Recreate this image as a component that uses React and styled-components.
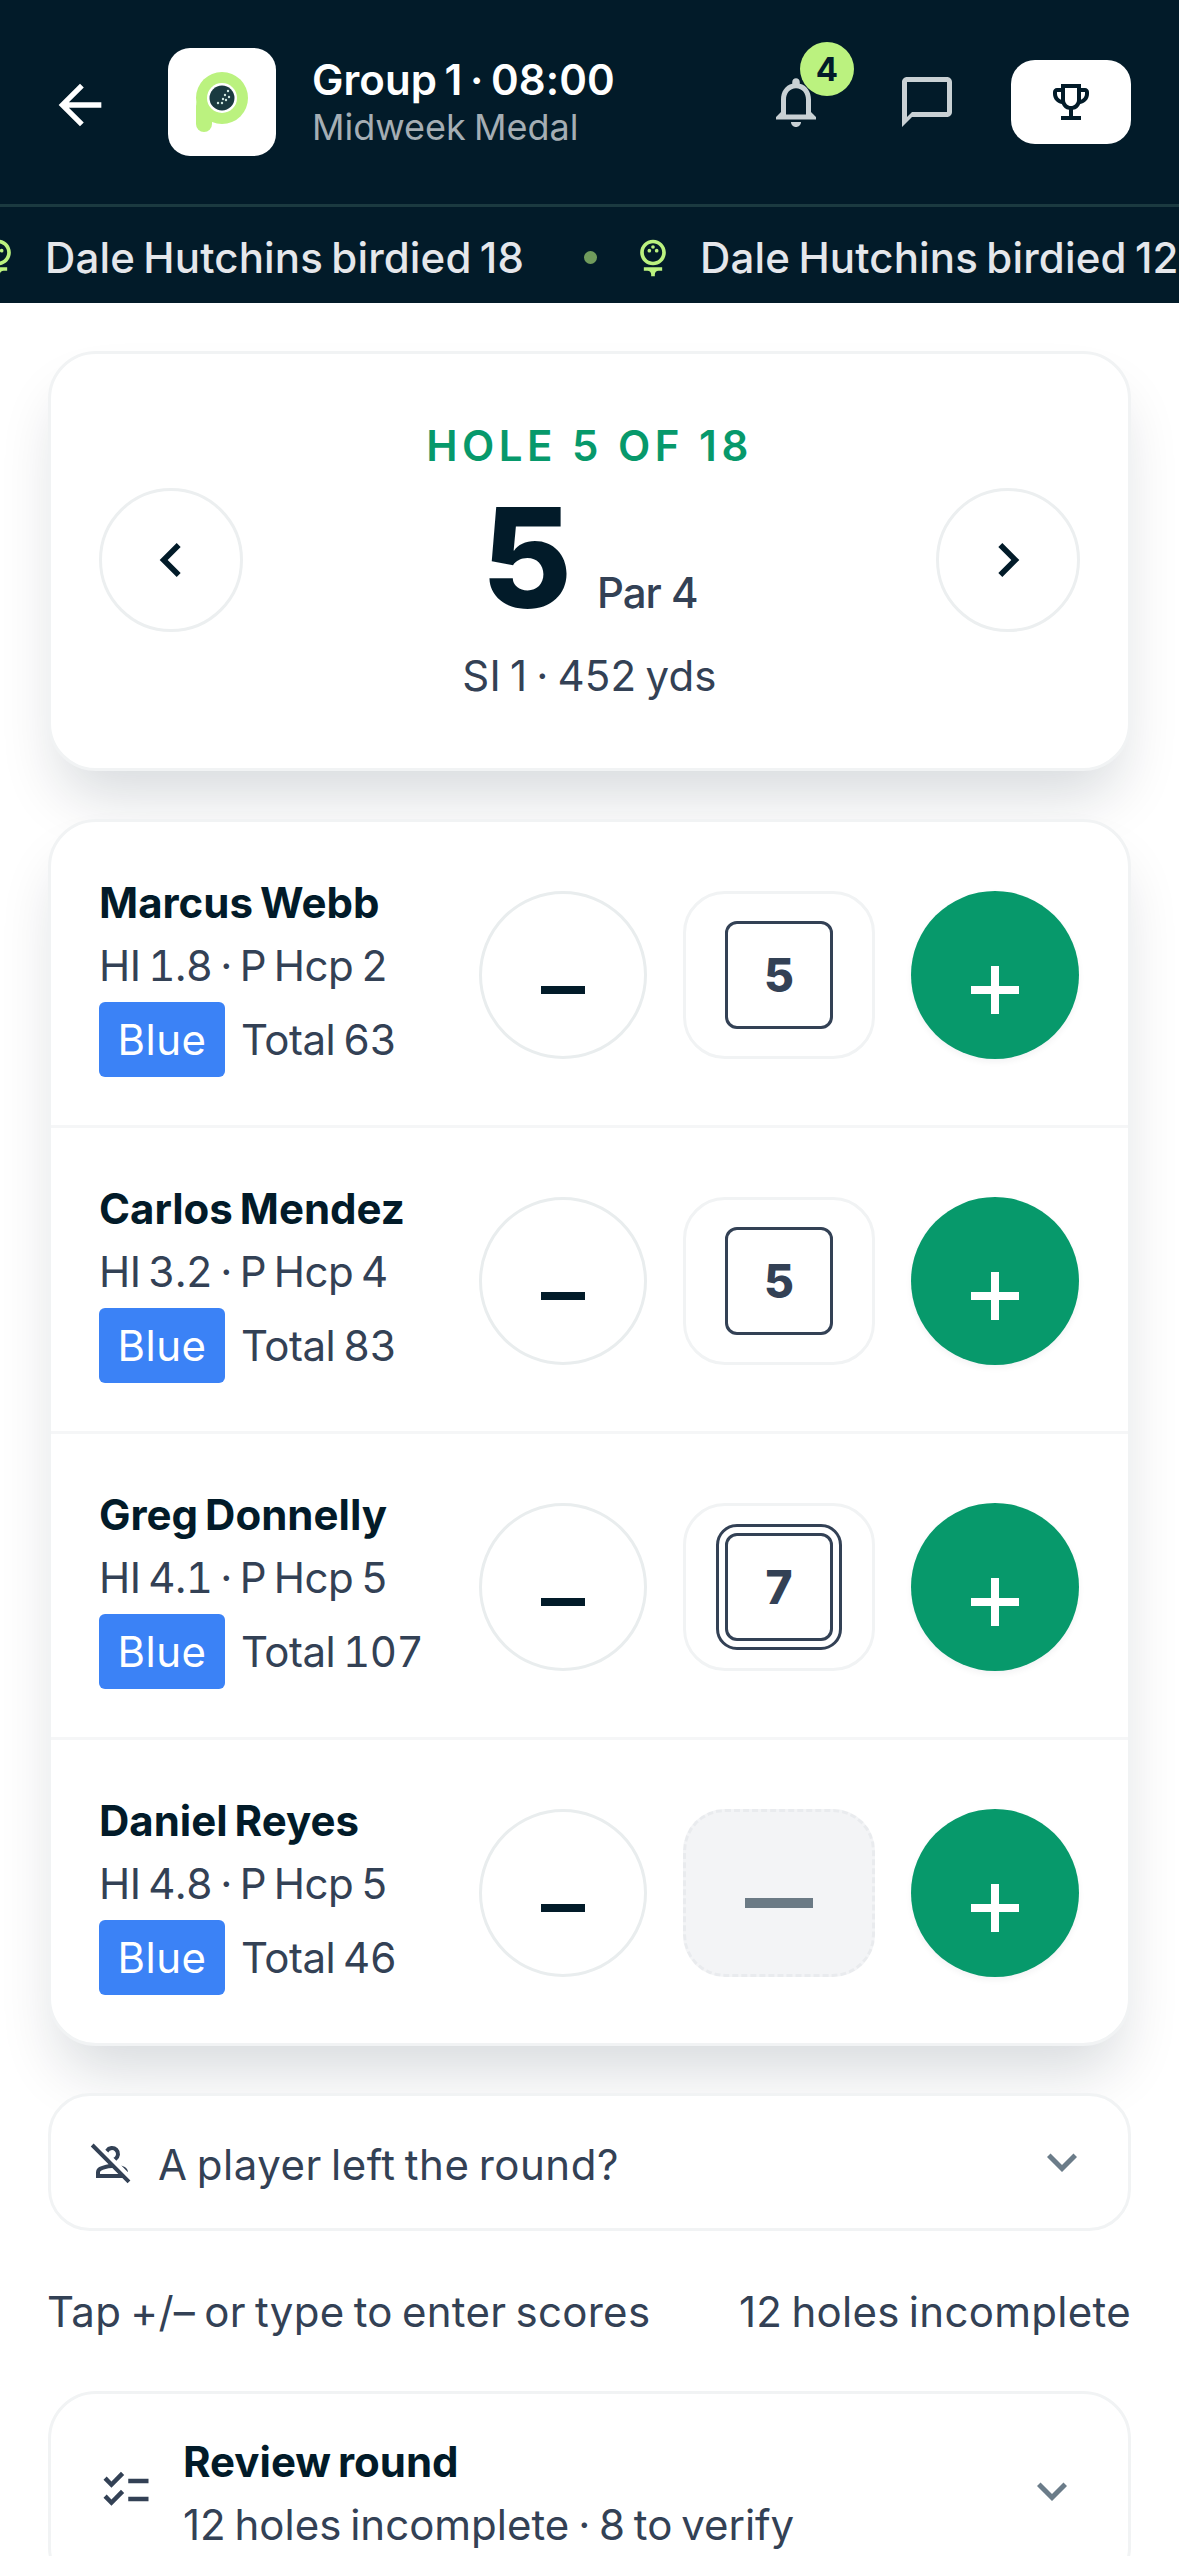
import React from "react";
import styled, { createGlobalStyle } from "styled-components";
import {
  MdArrowBack,
  MdNotificationsNone,
  MdChatBubbleOutline,
  MdOutlineEmojiEvents,
  MdOutlineSportsGolf,
  MdChevronLeft,
  MdChevronRight,
  MdExpandMore,
  MdOutlinePersonOff,
  MdChecklist,
} from "react-icons/md";

const Global = createGlobalStyle`
  html, body { margin: 0; padding: 0; background: #fff; }
  body { font-family: Inter, "Noto Sans", sans-serif; color: #021b29; overflow: hidden; }
  * { box-sizing: border-box; }
`;

const Page = styled.div`
  width: 1179px;
  height: 2556px;
  overflow: hidden;
  background: #fff;
`;

const Header = styled.header`
  background: #021b29;
`;

const TopBar = styled.div`
  height: 204px;
  display: flex;
  align-items: center;
  padding-left: 48px;
  padding-right: 48px;
`;

const BackButton = styled.div`
  display: flex;
  width: 64px;
  color: #fff;
  margin: 6px 56px 0 0;
`;

const LogoTile = styled.div`
  width: 108px;
  height: 108px;
  border-radius: 22px;
  background: #fff;
  display: flex;
  margin-right: 36px;
`;

const Titles = styled.div`
  flex: 1;
  min-width: 0;
`;

const Title = styled.div`
  font-size: 42px;
  line-height: 50px;
  font-weight: 600;
  letter-spacing: 0.05px;
  word-spacing: -3px;
  color: #fff;
`;

const Subtitle = styled.div`
  font-size: 36px;
  line-height: 44px;
  word-spacing: -2px;
  color: #a5aeb4;
`;

const IconAction = styled.div`
  position: relative;
  display: flex;
  color: #c9d1d4;
  margin-right: ${(p) => p.$gap}px;
`;

const Badge = styled.span`
  position: absolute;
  top: -30px;
  left: 34px;
  width: 54px;
  height: 54px;
  border-radius: 50%;
  background: #bbf27f;
  color: #021b29;
  font-size: 33px;
  font-weight: 700;
  display: flex;
  align-items: center;
  justify-content: center;
`;

const TrophyButton = styled.div`
  width: 120px;
  height: 84px;
  border-radius: 24px;
  background: #fff;
  color: #021b29;
  display: flex;
  align-items: center;
  justify-content: center;
`;

const Ticker = styled.div`
  height: 99px;
  padding-top: 5px;
  border-top: 3px solid #1b3a40;
  display: flex;
  align-items: center;
  overflow: hidden;
  white-space: nowrap;
`;

const TickerTrack = styled.div`
  display: flex;
  align-items: center;
  transform: translateX(-24px);
`;

const TickerItem = styled.div`
  display: flex;
  align-items: center;
  flex: none;
  gap: 25px;
  font-size: 42px;
  font-weight: 500;
  letter-spacing: 0.15px;
  word-spacing: -3px;
  color: #e5e7eb;
  svg { color: #bbf27f; flex: none; }
`;

const TickerDot = styled.span`
  width: 13px;
  height: 13px;
  border-radius: 50%;
  background: #bbf27f;
  opacity: 0.6;
  flex: none;
  margin: 0 34px 0 60px;
`;

const Main = styled.main`
  display: flex;
  flex-direction: column;
  padding: 48px 48px 0;
`;

const Card = styled.section`
  background: #fff;
  border: 3px solid #f1f3f4;
  border-radius: 48px;
`;

const HoleCard = styled(Card)`
  height: 420px;
  padding: 68px 48px 0;
  margin-bottom: 48px;
  box-shadow: 0 36px 60px -12px rgba(2, 27, 41, 0.16);
  display: flex;
  flex-direction: column;
  align-items: center;
`;

const HoleLabel = styled.div`
  font-size: 42px;
  line-height: 48px;
  font-weight: 600;
  letter-spacing: 4.5px;
  color: #07996b;
`;

const HoleNav = styled.div`
  width: 100%;
  height: 144px;
  margin-top: 18px;
  display: flex;
  align-items: center;
  justify-content: space-between;
`;

const NavButton = styled.div`
  width: 144px;
  height: 144px;
  border-radius: 50%;
  border: 3px solid #eceff0;
  display: flex;
  align-items: center;
  justify-content: center;
  color: #021b29;
`;

const HoleFigure = styled.div`
  display: flex;
  align-items: baseline;
  gap: 25px;
  transform: translateY(-2px);
`;

const HoleNumber = styled.span`
  font-size: 139px;
  line-height: 144px;
  font-weight: 800;
  color: #021b29;
`;

const Par = styled.span`
  font-size: 42px;
  font-weight: 500;
  letter-spacing: -1px;
  color: #334155;
`;

const HoleMeta = styled.div`
  font-size: 42px;
  line-height: 60px;
  margin-top: 14px;
  letter-spacing: 0.2px;
  word-spacing: -3px;
  color: #334155;
`;

const PlayersCard = styled(Card)`
  margin-bottom: 47px;
  box-shadow: 0 36px 60px -12px rgba(2, 27, 41, 0.16);
`;

const PlayerRow = styled.div`
  height: ${(p) => (p.$last ? 303 : 306)}px;
  padding: 0 49px 0 48px;
  display: flex;
  align-items: center;
  justify-content: space-between;
  border-bottom: ${(p) => (p.$last ? "none" : "3px solid #f5f6f7")};
`;

const PlayerInfo = styled.div`
  display: flex;
  flex-direction: column;
`;

const PlayerName = styled.div`
  font-size: 42px;
  line-height: 63px;
  font-weight: 700;
  word-spacing: -3px;
  color: #021b29;
`;

const PlayerMeta = styled.div`
  font-size: 42px;
  line-height: 63px;
  letter-spacing: -0.5px;
  word-spacing: -3px;
  font-variant-numeric: tabular-nums;
  color: #334155;
`;

const TeeLine = styled.div`
  display: flex;
  align-items: center;
  gap: 16px;
  margin-top: 5px;
  font-size: 42px;
  letter-spacing: -0.5px;
  word-spacing: -3px;
  font-variant-numeric: tabular-nums;
  color: #334155;
`;

const TeePill = styled.span`
  width: 126px;
  height: 75px;
  border-radius: 6px;
  background: #3b82f6;
  color: #fff;
  letter-spacing: 0.5px;
  display: flex;
  align-items: center;
  justify-content: center;
`;

const Controls = styled.div`
  display: flex;
  align-items: center;
  gap: 36px;
  margin-top: 2px;
`;

const RoundButton = styled.div`
  width: 168px;
  height: 168px;
  border-radius: 50%;
  display: flex;
  align-items: center;
  justify-content: center;
  padding-top: 30px;
`;

const MinusButton = styled(RoundButton)`
  border: 3px solid #e9edee;
  background: #fff;
`;

const PlusButton = styled(RoundButton)`
  background: #07996b;
  color: #fff;
  box-shadow: 0 3px 6px rgba(2, 27, 41, 0.05);
`;

const MinusBar = styled.span`
  width: 44px;
  height: 8px;
  background: #021b29;
`;

const ScoreCell = styled.div`
  width: 192px;
  height: 168px;
  border-radius: 42px;
  border: 3px ${(p) => (p.$empty ? "dashed #e9ebee" : "solid #f1f3f4")};
  background: ${(p) => (p.$empty ? "#f3f4f6" : "#fff")};
  display: flex;
  align-items: center;
  justify-content: center;
`;

const ScoreBox = styled.div`
  position: relative;
  width: 108px;
  height: 108px;
  border: 3px solid #334155;
  border-radius: 12px;
  display: flex;
  align-items: center;
  justify-content: center;
  font-size: 46px;
  font-weight: 800;
  color: #334155;

  ${(p) =>
    p.$double &&
    `
    &::after {
      content: "";
      position: absolute;
      inset: -12px;
      border: 3px solid #334155;
      border-radius: 21px;
    }
  `}
`;

const EmptyDash = styled.span`
  width: 68px;
  height: 10px;
  background: #6b7a85;
  margin-top: 20px;
`;

const LeftRound = styled(Card)`
  height: 138px;
  border-radius: 42px;
  padding: 0 36px 0 37px;
  display: flex;
  align-items: center;
  font-size: 42px;
  letter-spacing: 0.5px;
  word-spacing: -3px;
  color: #334155;
`;

const LeftLabel = styled.span`
  flex: 1;
  margin: 4px 0 0 22px;
  font-weight: 400;
`;

const Caret = styled.div`
  display: flex;
  color: #6b7c89;
`;

const Hint = styled.div`
  height: 160px;
  padding-top: 1px;
  margin-left: -1px;
  display: flex;
  align-items: center;
  justify-content: space-between;
  font-size: 42px;
  letter-spacing: 0.3px;
  word-spacing: -3px;
  color: #334155;
`;

const ReviewCard = styled(Card)`
  height: 204px;
  padding: 36px 46px 0 48px;
  display: flex;
  align-items: flex-start;
  color: #334155;
`;

const ReviewIcon = styled.div`
  display: flex;
  margin: 33px 30px 0 0;
`;

const ReviewText = styled.div`
  flex: 1;
`;

const ReviewTitle = styled.div`
  font-size: 42px;
  line-height: 63px;
  font-weight: 700;
  word-spacing: -3px;
  color: #021b29;
`;

const ReviewSub = styled.div`
  font-size: 42px;
  line-height: 63px;
  word-spacing: -3px;
  color: #334155;
`;

const ReviewCaret = styled(Caret)`
  margin-top: 31px;
`;

const players = [
  { name: "Marcus Webb", meta: "HI 1.8 · P Hcp 2", total: 63, score: 5 },
  { name: "Carlos Mendez", meta: "HI 3.2 · P Hcp 4", total: 83, score: 5 },
  { name: "Greg Donnelly", meta: "HI 4.1 · P Hcp 5", total: 107, score: 7, double: true },
  { name: "Daniel Reyes", meta: "HI 4.8 · P Hcp 5", total: 46 },
];

const Logo = () => (
  <svg width="108" height="108" viewBox="0 0 108 108" aria-hidden="true">
    <circle cx="54" cy="50" r="26" fill="#bbf27f" />
    <rect x="28" y="50" width="16" height="34" rx="8" fill="#bbf27f" />
    <circle cx="54" cy="50" r="15" fill="#fff" />
    <circle cx="54" cy="50" r="12.500" fill="#1a3a40" />
    <g fill="#cfe8e0">
      <circle cx="60" cy="43" r="1.200" />
      <circle cx="57" cy="47" r="1.200" />
      <circle cx="61" cy="49" r="1.200" />
      <circle cx="55" cy="51" r="1.200" />
      <circle cx="58" cy="52" r="1.200" />
      <circle cx="50" cy="55" r="1.200" />
      <circle cx="54" cy="55" r="1.200" />
    </g>
  </svg>
);

const Plus = () => (
  <svg width="48" height="48" viewBox="0 0 48 48" aria-hidden="true">
    <path d="M20 0h8v20h20v8H28v20h-8V28H0v-8h20z" fill="currentColor" />
  </svg>
);

const TickerEntry = ({ text }) => (
  <TickerItem>
    <MdOutlineSportsGolf size={44} />
    <span>{text}</span>
  </TickerItem>
);

export default function App() {
  return (
    <Page>
      <Global />
      <Header>
        <TopBar>
          <BackButton>
            <MdArrowBack size={64} />
          </BackButton>
          <LogoTile>
            <Logo />
          </LogoTile>
          <Titles>
            <Title>Group 1 · 08:00</Title>
            <Subtitle>Midweek Medal</Subtitle>
          </Titles>
          <IconAction $gap={71}>
            <MdNotificationsNone size={60} />
            <Badge>4</Badge>
          </IconAction>
          <IconAction $gap={54}>
            <MdChatBubbleOutline size={60} />
          </IconAction>
          <TrophyButton>
            <MdOutlineEmojiEvents size={48} />
          </TrophyButton>
        </TopBar>
        <Ticker>
          <TickerTrack>
            <TickerEntry text="Dale Hutchins birdied 18" />
            <TickerDot />
            <TickerEntry text="Dale Hutchins birdied 12" />
          </TickerTrack>
        </Ticker>
      </Header>
      <Main>
        <HoleCard>
          <HoleLabel>HOLE 5 OF 18</HoleLabel>
          <HoleNav>
            <NavButton>
              <MdChevronLeft size={68} />
            </NavButton>
            <HoleFigure>
              <HoleNumber>5</HoleNumber>
              <Par>Par 4</Par>
            </HoleFigure>
            <NavButton>
              <MdChevronRight size={68} />
            </NavButton>
          </HoleNav>
          <HoleMeta>SI 1 · 452 yds</HoleMeta>
        </HoleCard>

        <PlayersCard>
          {players.map((p, i) => (
            <PlayerRow key={p.name} $last={i === players.length - 1}>
              <PlayerInfo>
                <PlayerName>{p.name}</PlayerName>
                <PlayerMeta>{p.meta}</PlayerMeta>
                <TeeLine>
                  <TeePill>Blue</TeePill>
                  <span>Total {p.total}</span>
                </TeeLine>
              </PlayerInfo>
              <Controls>
                <MinusButton>
                  <MinusBar />
                </MinusButton>
                <ScoreCell $empty={p.score === undefined}>
                  {p.score === undefined ? (
                    <EmptyDash />
                  ) : (
                    <ScoreBox $double={p.double}>{p.score}</ScoreBox>
                  )}
                </ScoreCell>
                <PlusButton>
                  <Plus />
                </PlusButton>
              </Controls>
            </PlayerRow>
          ))}
        </PlayersCard>

        <LeftRound>
          <MdOutlinePersonOff size={48} />
          <LeftLabel>A player left the round?</LeftLabel>
          <Caret>
            <MdExpandMore size={60} />
          </Caret>
        </LeftRound>

        <Hint>
          <span>Tap +/– or type to enter scores</span>
          <span>12 holes incomplete</span>
        </Hint>

        <ReviewCard>
          <ReviewIcon>
            <MdChecklist size={54} />
          </ReviewIcon>
          <ReviewText>
            <ReviewTitle>Review round</ReviewTitle>
            <ReviewSub>12 holes incomplete · 8 to verify</ReviewSub>
          </ReviewText>
          <ReviewCaret>
            <MdExpandMore size={60} />
          </ReviewCaret>
        </ReviewCard>
      </Main>
    </Page>
  );
}
